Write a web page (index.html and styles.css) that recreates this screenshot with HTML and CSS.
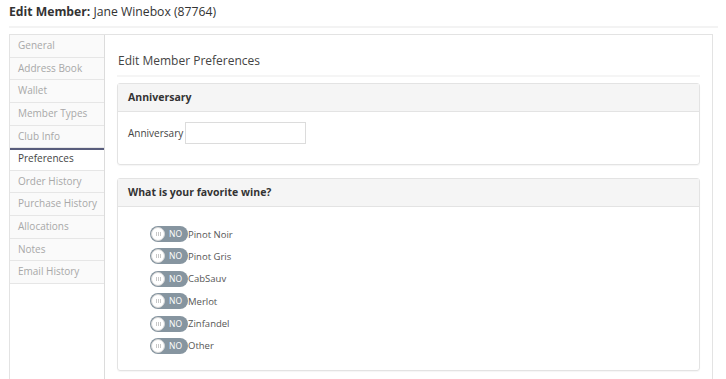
FILE: index.html
```html
<!DOCTYPE html>
<html>
<head>
<meta charset="utf-8">
<link rel="stylesheet" href="styles.css">
</head>
<body>
<div class="page">
  <h1 class="title"><b>Edit Member:</b> Jane Winebox (87764)</h1>
  <div class="frame">
    <ul class="nav">
      <li>General</li>
      <li>Address Book</li>
      <li>Wallet</li>
      <li>Member Types</li>
      <li>Club Info</li>
      <li class="active">Preferences</li>
      <li>Order History</li>
      <li>Purchase History</li>
      <li>Allocations</li>
      <li>Notes</li>
      <li>Email History</li>
    </ul>
    <div class="content">
      <h2 class="heading">Edit Member Preferences</h2>
      <div class="panel">
        <div class="panel-head">Anniversary</div>
        <div class="panel-body body-anniv">
          <label class="field-label">Anniversary</label>
          <input class="field" type="text">
        </div>
      </div>
      <div class="panel">
        <div class="panel-head">What is your favorite wine?</div>
        <div class="panel-body body-wine">
          <div class="opt"><span class="toggle"><span class="knob"><i></i><i></i><i></i></span><span class="no">NO</span></span><span class="opt-label">Pinot Noir</span></div>
          <div class="opt"><span class="toggle"><span class="knob"><i></i><i></i><i></i></span><span class="no">NO</span></span><span class="opt-label">Pinot Gris</span></div>
          <div class="opt"><span class="toggle"><span class="knob"><i></i><i></i><i></i></span><span class="no">NO</span></span><span class="opt-label">CabSauv</span></div>
          <div class="opt"><span class="toggle"><span class="knob"><i></i><i></i><i></i></span><span class="no">NO</span></span><span class="opt-label">Merlot</span></div>
          <div class="opt"><span class="toggle"><span class="knob"><i></i><i></i><i></i></span><span class="no">NO</span></span><span class="opt-label">Zinfandel</span></div>
          <div class="opt"><span class="toggle"><span class="knob"><i></i><i></i><i></i></span><span class="no">NO</span></span><span class="opt-label">Other</span></div>
        </div>
      </div>
    </div>
  </div>
</div>
</body>
</html>
```
FILE: styles.css
```css
html, body {
  margin: 0;
  padding: 0;
  background: #fff;
  font-family: "Open Sans", "Liberation Sans", sans-serif;
  color: #333;
}
.page {
  padding: 3px 13px 0 9px;
}
.title {
  margin: 0 -5px 0 0;
  font-size: 12.2px;
  font-weight: 400;
  line-height: 18px;
  color: #333;
  padding-bottom: 5px;
  border-bottom: 2px solid #f3f3f3;
}
.title b {
  font-weight: 700;
}
.frame {
  margin-top: 6px;
  display: flex;
  border: 1px solid #e3e3e3;
  border-bottom: none;
  height: 400px;
}
.nav {
  list-style: none;
  margin: 0;
  padding: 0;
  width: 94px;
  border-right: 1px solid #dcdcdc;
  flex-shrink: 0;
}
.nav li {
  font-size: 10px;
  color: #a8a8a8;
  height: 21.65px;
  line-height: 21.65px;
  padding-left: 8px;
  background: #fafafa;
  border-bottom: 1px solid #e6e6e6;
  white-space: nowrap;
}
.nav li.active {
  background: #fff;
  color: #444;
  box-shadow: inset 0 2px 0 #585c7c;
}
.content {
  flex: 1;
  padding: 0 12px 0 12px;
}
.heading {
  margin: 0;
  font-size: 12px;
  font-weight: 400;
  color: #444;
  padding: 17px 0 5px 1px;
  line-height: 18px;
  border-bottom: 2px solid #f5f5f5;
}
.panel {
  margin-top: 6px;
  border: 1px solid #e3e3e3;
  border-radius: 3px;
  box-shadow: 0 1px 1px rgba(0,0,0,0.04);
}
.panel + .panel {
  margin-top: 13px;
}
.panel-head {
  background: #f5f5f5;
  border-bottom: 1px solid #e3e3e3;
  height: 27px;
  line-height: 27px;
  padding-left: 10px;
  font-size: 10.5px;
  font-weight: 700;
  color: #333;
}
.body-anniv {
  display: flex;
  align-items: center;
  gap: 2px;
  padding: 10px 10px 20px 10px;
}
.field-label {
  font-size: 10px;
  color: #444;
}
.field {
  width: 117px;
  height: 18px;
  border: 1px solid #dcdcdc;
  padding: 1px;
  margin: 0;
  box-sizing: content-box;
}
.body-wine {
  padding: 19px 10px 16px 32px;
  display: flex;
  flex-direction: column;
  gap: 6.4px;
}
.opt {
  display: flex;
  align-items: center;
  height: 16px;
}
.toggle {
  display: inline-flex;
  align-items: center;
  width: 38px;
  height: 16px;
  border-radius: 8px;
  background: #8695a0;
  box-sizing: border-box;
  padding-left: 1px;
}
.knob {
  width: 14px;
  height: 14px;
  border-radius: 50%;
  background: #fff;
  display: flex;
  align-items: center;
  justify-content: center;
  gap: 1px;
  box-sizing: border-box;
  border: 1px solid #d4d4d4;
}
.knob i {
  display: block;
  width: 1px;
  height: 4px;
  background: #c8c8c8;
}
.no {
  font-size: 8.5px;
  color: #fff;
  margin-left: 4px;
  line-height: 16px;
}
.opt-label {
  font-size: 9.5px;
  color: #555;
  margin-left: 0;
}
```
